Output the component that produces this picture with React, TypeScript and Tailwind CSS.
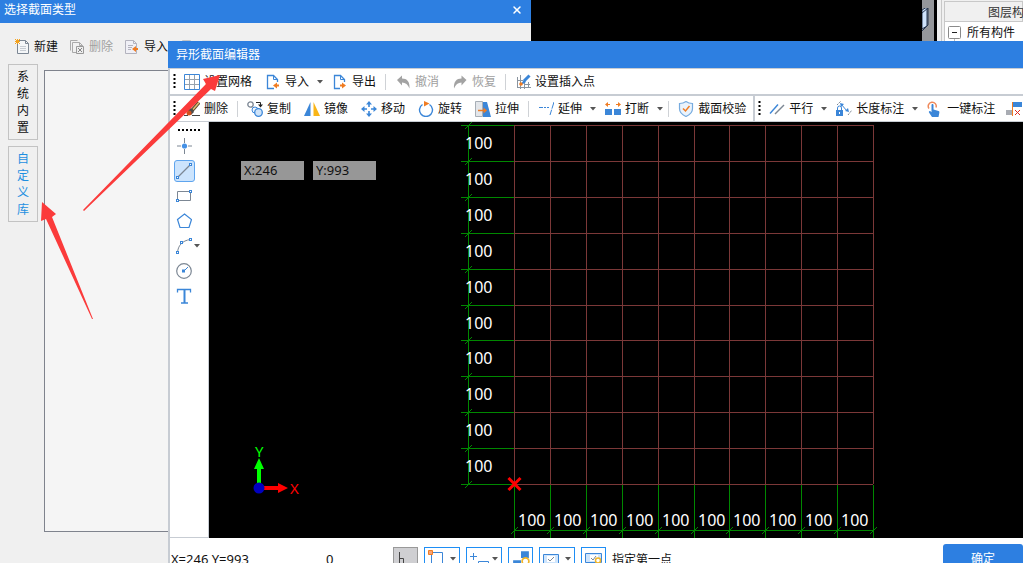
import type { ReactNode } from "react";
import clsx from "clsx";
import { X } from "lucide-react";

const BLUE = "#3b86d8";
const SLATE = "#7c8794";
const ORANGE = "#f07c22";

function Glyph({ children, size = 16 }: { children: ReactNode; size?: number }) {
  return (
    <svg width={size} height={size} viewBox="0 0 16 16" fill="none" className="shrink-0" aria-hidden="true">
      {children}
    </svg>
  );
}

/* ---------- icons ---------- */

const icons = {
  newFile: (
    <Glyph>
      <path d="M3.500 1.500h8l3 3v10h-11z" fill="#f4f6f8" stroke={SLATE} />
      <path d="M11.500 1.500v3h3" stroke={SLATE} />
      <path d="M6 7.500h6M6 9.500h6M6 11.500h6" stroke="#c6cbd2" />
      <path d="M1 0l5 5M6 0L1 5M3.500 0v5M1 2.500h5" stroke="#f5a21c" />
    </Glyph>
  ),
  deleteFile: (
    <Glyph>
      <path d="M1.500 11.500v-10h7M3.500 13.500v-10h7l3 3v7z" stroke="#a9a9a9" />
      <path d="M10.500 3.500v3h3" stroke="#a9a9a9" />
      <path d="M7.500 7.500h7v7h-7z" fill="#eee" stroke="#999" />
      <path d="M9 9l4 4M13 9l-4 4" stroke="#888" />
    </Glyph>
  ),
  importGray: (
    <Glyph>
      <path d="M1.500 1.500h8l3 3v10h-11z" fill="#f0f0f6" stroke="#b3b3be" />
      <path d="M9.500 1.500v3h3M4 6.500h5M4 8.500h4M4 10.500h3" stroke="#b3b3be" />
      <path d="M8 10l4-3v2h2v2h-2v2z" fill={ORANGE} />
    </Glyph>
  ),
  exportGray: (
    <Glyph>
      <path d="M1.500 1.500h8l3 3v10h-11z" fill="#f0f0f0" stroke="#c4c4c4" />
    </Glyph>
  ),
  grid: (
    <Glyph>
      <path d="M5.500 1v14M10.500 1v14M1 5.500h14M1 10.500h14" stroke="#98a2ad" />
      <path d="M.5 .5h15v15H.5z" stroke={BLUE} />
    </Glyph>
  ),
  importFile: (
    <Glyph>
      <path d="M9 14.500H2.500v-13h6l4 4V8" stroke={BLUE} strokeWidth="1.300" />
      <path d="M8.500 1.500v4h4" stroke={BLUE} />
      <path d="M8 11.500l4-3v2h2v2h-2v2z" fill={ORANGE} />
    </Glyph>
  ),
  exportFile: (
    <Glyph>
      <path d="M8 14.500H2.500v-13h6l4 4V8" stroke={BLUE} strokeWidth="1.300" />
      <path d="M8.500 1.500v4h4" stroke={BLUE} />
      <path d="M14 11.500l-4-3v2H8v2h2v2z" fill={ORANGE} />
    </Glyph>
  ),
  undo: (
    <Glyph>
      <path d="M2 6l5-4.500V4.500c5 0 8 3 7.500 10-1.500-4-4-6-7.500-6v3z" fill="#a3a3a3" />
    </Glyph>
  ),
  redo: (
    <Glyph>
      <path d="M14.500 6l-5-4.500V4.500c-5 0-8 3-7.500 10 1.500-4 4-6 7.500-6v3z" fill="#a3a3a3" />
    </Glyph>
  ),
  insertPoint: (
    <Glyph>
      <path d="M5.500 1v14M9.500 8v7M2 6.500h6M2 13.500h14M2.500 3v11M9 10.500h6M13.500 8v6" stroke="#8a949f" />
      <path d="M14.500 1.500L9 7" stroke={BLUE} strokeWidth="3" />
      <path d="M5 11l4-5 2 2-3 2z" fill={BLUE} />
      <circle cx="6" cy="10" r="1.800" fill={ORANGE} />
    </Glyph>
  ),
  brush: (
    <Glyph>
      <path d="M0 14.500h4M8 14.500h8" stroke="#444" />
      <path d="M15 1.500L8 9.500" stroke="#5a4a30" strokeWidth="3.500" />
      <path d="M15 1.500L9 8.500" stroke="#e2c074" strokeWidth="1.500" />
      <path d="M3 9l4 5 3-3-3-4z" fill="#4c4c4c" />
      <circle cx="5" cy="12" r="2.500" fill="#d3511b" />
    </Glyph>
  ),
  copy: (
    <Glyph>
      <circle cx="3.500" cy="3.500" r="2.700" stroke={SLATE} strokeWidth="1.300" />
      <circle cx="8" cy="9" r="3" fill="#eef5fd" stroke={BLUE} />
      <circle cx="11.500" cy="11.500" r="3.800" fill="#cfe3f8" stroke={BLUE} strokeWidth="1.300" />
      <path d="M9 1.500h4.500V4" stroke="#222" />
      <path d="M11 3.500h5l-2.500 3z" fill="#222" />
    </Glyph>
  ),
  mirror: (
    <Glyph>
      <path d="M6.500 1v14H0z" fill={BLUE} />
      <path d="M9.500 1v14H16z" fill="#f9b517" />
    </Glyph>
  ),
  move: (
    <Glyph>
      <path d="M8 3v3M8 10v3M3 8h3M10 8h3" stroke={BLUE} strokeWidth="1.600" />
      <path d="M8 0l3 3.500H5zM8 16l3-3.500H5zM0 8l3.500-3v6zM16 8l-3.500-3v6z" fill={BLUE} />
    </Glyph>
  ),
  rotate: (
    <Glyph>
      <path d="M11.500 3.500a6.500 6.500 0 11-7 0" stroke={BLUE} strokeWidth="1.400" />
      <path d="M6 0l5.500 2.500L6 5.500z" fill={ORANGE} />
    </Glyph>
  ),
  stretch: (
    <Glyph>
      <path d="M.5 .5h7v15h-7z" fill="#e3e6ea" stroke="#a7aeb6" />
      <path d="M8 1h4l4 15H8z" fill={BLUE} />
      <path d="M3 9.500h7" stroke={ORANGE} strokeWidth="1.500" />
      <path d="M8.500 6.500l3.500 3-3.500 3z" fill={ORANGE} />
    </Glyph>
  ),
  extend: (
    <Glyph>
      <path d="M1 6.500h4M6 6.500h2M9 6.500h2" stroke={BLUE} />
      <path d="M16 1l-4 13" stroke={BLUE} strokeDasharray="7 1" />
    </Glyph>
  ),
  breakLine: (
    <Glyph>
      <path d="M0 8h7v6H0zM9 8h7v6H9z" fill={BLUE} />
      <path d="M1 3.500h4M11 3.500h4" stroke={ORANGE} />
      <path d="M0 3.500L3 1v5zM16 3.500L13 1v5z" fill={ORANGE} />
    </Glyph>
  ),
  shield: (
    <Glyph>
      <path
        d="M8 .5c2 1.500 4 2 6.500 2v5c0 3.500-3 6.500-6.500 8-3.500-1.500-6.500-4.500-6.500-8v-5c2.500 0 4.500-.5 6.500-2z"
        fill="#eaf3fc"
        stroke="#76abdf"
        strokeWidth="1.200"
      />
      <path d="M5 7.500l2.500 2.500L11.500 5" stroke={ORANGE} strokeWidth="1.500" />
    </Glyph>
  ),
  parallel: (
    <Glyph>
      <path d="M1 12.500L9 3.500" stroke={BLUE} strokeWidth="1.400" />
      <path d="M6 13L15 4" stroke={SLATE} strokeWidth="1.400" />
    </Glyph>
  ),
  length: (
    <Glyph>
      <path d="M1.500 9V7a2 2 0 014 0v2" stroke={BLUE} />
      <path d="M0 9h7v6H0z" fill={BLUE} />
      <path d="M3 11h1v2H3z" fill="#fff" />
      <path d="M5 3l6 7" stroke={BLUE} />
      <path d="M4 2l4 1-3 3zM13 11l-4-1 3-3z" fill={BLUE} />
      <path d="M1 4l4-4M12 14l4-5" stroke={SLATE} strokeDasharray="2 1" />
    </Glyph>
  ),
  finger: (
    <Glyph>
      <path d="M2 7.500a4 4 0 117-1" stroke="#ef8a5c" strokeWidth="1.500" />
      <path
        d="M4.500 4c0-1.500 2-1.500 2 0v4.500l5 1.500c1 .3 1 1 .8 2L11.500 16H5l-3-4.500c-.5-1 .5-2 1.500-1.200l1 1z"
        fill={BLUE}
      />
    </Glyph>
  ),
  clearMark: (
    <Glyph>
      <path d="M0 9h6v5H0z" fill="#a9acb3" />
      <path d="M6.500 1v14" stroke={ORANGE} />
      <path d="M7 1h9v5H7z" fill={BLUE} />
      <path d="M9 9l5 5M14 9l-5 5" stroke="#e02b20" />
    </Glyph>
  ),
};

function Node({ x, y }: { x: number; y: number }) {
  return <rect x={x - 1} y={y - 1} width="2" height="2" fill="#fff" stroke={BLUE} />;
}

const drawTools: { name: string; icon: ReactNode; active?: boolean; menu?: boolean }[] = [
  {
    name: "点",
    icon: (
      <Glyph>
        <path d="M8.500 0v5M8.500 11v5M1 8h4M12 8h4" stroke={SLATE} />
        <circle cx="8.500" cy="8" r="2.600" fill="#4591e6" />
      </Glyph>
    ),
  },
  {
    name: "直线",
    active: true,
    icon: (
      <Glyph>
        <path d="M2 14L14 2" stroke={SLATE} strokeWidth="1.300" />
        <Node x={1.5} y={14.5} />
        <Node x={14.5} y={1.5} />
      </Glyph>
    ),
  },
  {
    name: "矩形",
    icon: (
      <Glyph>
        <path d="M1.500 3.500h13v9h-13z" stroke={SLATE} />
        <Node x={1.5} y={12.5} />
        <Node x={14.5} y={3.5} />
      </Glyph>
    ),
  },
  {
    name: "多边形",
    icon: (
      <Glyph>
        <path d="M8.500 1l7 5.500-2.500 8H4l-2.500-8z" stroke={BLUE} strokeWidth="1.200" />
      </Glyph>
    ),
  },
  {
    name: "弧线",
    menu: true,
    icon: (
      <Glyph>
        <path d="M1.500 14.500C2 8 6 2.500 14.500 1.500" stroke={SLATE} />
        <Node x={1.5} y={14.5} />
        <Node x={5.5} y={4.5} />
        <Node x={14.5} y={1.5} />
      </Glyph>
    ),
  },
  {
    name: "圆",
    icon: (
      <Glyph>
        <circle cx="8" cy="8" r="7.300" stroke={SLATE} strokeWidth="1.200" />
        <path d="M8 8l4-4" stroke={BLUE} />
        <Node x={7.5} y={8} />
      </Glyph>
    ),
  },
  {
    name: "文字",
    icon: (
      <Glyph>
        <path d="M1.500 4.500v-3h13v3M5 15h7" stroke={BLUE} strokeWidth="1.300" />
        <path d="M8.500 1v14" stroke={BLUE} strokeWidth="2" />
      </Glyph>
    ),
  },
];

/* ---------- toolbar parts ---------- */

function Caret() {
  return (
    <svg width="6" height="4" viewBox="0 0 6 4" className="shrink-0" aria-hidden="true">
      <path d="M0 0h6L3 3.500z" fill="#555" />
    </svg>
  );
}

function Handle() {
  return (
    <svg width="3" height="15" viewBox="0 0 3 15" className="mr-px ml-0.5 shrink-0" aria-hidden="true">
      <path d="M1.500 0v15" stroke="#000" strokeWidth="2" strokeDasharray="2 2" />
    </svg>
  );
}

function Separator() {
  return <span className="mx-0.5 h-4 w-px shrink-0 bg-[#cfd2d6]" />;
}

type ToolProps = { icon: ReactNode; label?: string; menu?: boolean; tight?: boolean; disabled?: boolean };

function Tool({ icon, label, menu, tight, disabled }: ToolProps) {
  return (
    <button
      type="button"
      disabled={disabled}
      className={clsx(
        "flex h-[22px] shrink-0 items-center gap-1 rounded-sm pl-1.5 whitespace-nowrap",
        menu ? "pr-0.5" : tight ? "pr-1" : "pr-1.5",
        disabled ? "text-[#a0a0a0]" : "text-[#111]",
      )}
    >
      {icon}
      {label}
      {menu && (
        <span className="ml-1">
          <Caret />
        </span>
      )}
    </button>
  );
}

/* ---------- drawing area ---------- */

const STEPS = Array.from({ length: 11 }, (_, i) => Math.round(i * 35.9));
const GX = 305;
const GY = 3;
const SPAN = STEPS[10];

function Canvas() {
  return (
    <svg width="814" height="416" className="block" role="img" aria-label="截面网格">
      <g stroke="#7b3838" shapeRendering="crispEdges">
        {STEPS.map((s) => (
          <g key={s}>
            <path d={`M${GX + s}.5 ${GY}v${SPAN}`} />
            <path d={`M${GX} ${GY + s}.5h${SPAN}`} />
          </g>
        ))}
      </g>
      <g stroke="#008800" fill="none">
        <path d={`M259.500 ${GY}v${SPAN}`} />
        <path d={`M${GX} 408.500h${SPAN}`} />
        {STEPS.map((s) => (
          <g key={s}>
            <path d={`M252 ${GY + s}.5h53`} />
            <path d={`M256 ${GY + s + 4}l7-7`} />
            <path d={`M${GX + s}.5 363v53`} />
            <path d={`M${GX + s - 3} 412l7-7`} />
          </g>
        ))}
      </g>
      <g fill="#fff" fontSize="16">
        {STEPS.slice(0, 10).map((s) => (
          <g key={s}>
            <text x="256" y={GY + s + 24}>100</text>
            <text x={GX + s + 4} y="404">100</text>
          </g>
        ))}
      </g>
      <path d="M299.500 356l12 12M311.500 356l-12 12" stroke="#f00" strokeWidth="3" />
      <path d="M48 366V347h-3l5-11 5 11h-3v19z" fill="#0f0" />
      <path d="M50 364h19v-3l10 5-10 5v-3H50z" fill="#f00" />
      <circle cx="50" cy="366" r="5.500" fill="#0000c0" />
      <text x="46" y="335" fontSize="15" fill="#0f0">Y</text>
      <text x="81" y="372" fontSize="15" fill="#f00">X</text>
    </svg>
  );
}

/* ---------- status bar ---------- */

type StatusButtonProps = { name: string; children: ReactNode; menu?: boolean; pressed?: boolean };

function StatusButton({ name, children, menu, pressed }: StatusButtonProps) {
  return (
    <button
      type="button"
      aria-label={name}
      className={clsx(
        "flex h-6 shrink-0 items-center gap-0.5 border pl-[3px]",
        menu ? "w-9" : "w-[25px]",
        pressed ? "border-[#999] bg-[#cfcfd2]" : "border-[#1e8ef5] bg-white",
      )}
    >
      {children}
      {menu && <Caret />}
    </button>
  );
}

function StatusBar() {
  return (
    <div className="flex h-[42px] shrink-0 items-center gap-1.5">
      <span className="w-[150px] pt-0.5 pl-px text-[13px]">X=246 Y=993</span>
      <span className="w-[61px] pt-0.5 text-[13px]">0</span>
      <StatusButton name="正交" pressed>
        <Glyph>
          <path d="M2.500 1v12M2.500 7.500h4V13M6 12.500h9" stroke="#444" />
        </Glyph>
      </StatusButton>
      <StatusButton name="对象捕捉" menu>
        <svg width="20" height="18" viewBox="0 0 20 18" fill="none" aria-hidden="true">
          <path d="M3.500 2.500h11v15h-11z" stroke={BLUE} />
          <path d="M.5 .5h4v4h-4z" fill="#f7a477" stroke={ORANGE} />
        </svg>
      </StatusButton>
      <StatusButton name="动态输入" menu>
        <svg width="20" height="18" viewBox="0 0 20 18" fill="none" aria-hidden="true">
          <path d="M0 6.500h7M3.500 3v7" stroke={BLUE} />
          <path d="M8.500 11.500h10v5h-10z" stroke={BLUE} />
        </svg>
      </StatusButton>
      <StatusButton name="图层设置">
        <Glyph size={18}>
          <path d="M8 1h7v6H8zM1 9h7v6H1z" fill={BLUE} />
          <circle cx="12" cy="10" r="3" fill="#fff" stroke="#f0b52a" strokeWidth="1.500" />
        </Glyph>
      </StatusButton>
      <StatusButton name="显示" menu>
        <svg width="20" height="14" viewBox="0 0 20 14" fill="none" aria-hidden="true">
          <path d="M.5 2.500h15v9H.5z" fill="#cfe5fc" stroke={BLUE} />
          <path d="M4 4h8v6H4z" fill="#fff" />
          <path d="M5 7l2 2 4-4" stroke={SLATE} />
        </svg>
      </StatusButton>
      <StatusButton name="显示设置">
        <svg width="18" height="16" viewBox="0 0 18 16" fill="none" aria-hidden="true">
          <path d="M.5 2.500h16v9H.5z" fill="#cfe5fc" stroke={BLUE} />
          <path d="M5 4h8v6H5z" fill="#fff" />
          <path d="M6 7l2 2 3-4" stroke={SLATE} />
          <circle cx="13" cy="9.500" r="2.500" fill="#fff" stroke="#f0b52a" strokeWidth="1.500" />
        </svg>
      </StatusButton>
      <span className="pt-0.5">指定第一点</span>
      <button type="button" className="ml-auto h-[30px] w-20 rounded-[3px] bg-[#2d7fe1] text-white">
        确定
      </button>
    </div>
  );
}

/* ---------- windows ---------- */

function SectionTypeWindow() {
  return (
    <section className="absolute top-0 left-0 flex h-full w-[531px] flex-col bg-[#f0f0f0]">
      <header className="flex h-[23px] shrink-0 items-center justify-between bg-[#2d7fe1] pr-2 pb-1 pl-1 text-white">
        <h1>选择截面类型</h1>
        <button type="button" aria-label="关闭">
          <X size={12} strokeWidth={3} />
        </button>
      </header>
      <div className="flex h-[41px] shrink-0 items-center gap-px pt-1.5 pl-2">
        <Tool icon={icons.newFile} label="新建" tight />
        <Tool icon={icons.deleteFile} label="删除" tight disabled />
        <Tool icon={icons.importGray} label="导入" />
        <Tool icon={icons.exportGray} disabled />
      </div>
      <div className="mb-[31px] flex min-h-0 grow gap-1.5 pl-2">
        <nav className="flex w-[30px] shrink-0 flex-col gap-1.5 leading-[17px]">
          <button type="button" className="border border-[#c3c3c3] px-2 py-[3px]">
            系统内置
          </button>
          <button type="button" className="border border-[#c3c3c3] px-2 py-[3px] text-[#1e8fe0]">
            自定义库
          </button>
        </nav>
        <div className="mt-1.5 grow border border-[#7f838d] bg-[#f5f5f5]" />
      </div>
    </section>
  );
}

function LayerPanel() {
  return (
    <aside className="absolute top-0 right-0 flex h-full w-[101px]">
      <div className="w-3 shrink-0 bg-[#95979b]">
        <svg width="8" height="24" viewBox="0 0 8 24" className="mt-2" aria-hidden="true">
          <path d="M0 2l5-3v19l-5 3z" fill="#cfe3fb" stroke="#27364f" />
          <path d="M0 5l6-5M6 0v17l-6 6" fill="none" stroke="#27364f" />
        </svg>
      </div>
      <div className="ml-[3px] flex min-w-0 grow flex-col bg-[#f0f0f0] pl-1">
        <div className="flex grow flex-col overflow-hidden border-l border-[#c8c8c8] pt-px pl-0.5">
          <div className="flex h-[21px] shrink-0 items-center border border-[#c8c8c8] pt-0.5 pl-[43px] whitespace-nowrap text-[#333]">
            图层构件
          </div>
          <div className="flex grow items-start gap-1.5 border-l border-[#c8c8c8] bg-white pl-[3px] leading-[22px] whitespace-nowrap">
            <svg width="13" height="24" viewBox="0 0 13 24" fill="none" className="shrink-0" aria-hidden="true">
              <rect x=".5" y="4.500" width="12" height="12" rx="1" stroke="#8a8a8a" />
              <path d="M4 10.500h5" stroke="#222" />
              <path d="M6.500 17v7" stroke="#bbb" />
            </svg>
            所有构件
          </div>
        </div>
      </div>
    </aside>
  );
}

function EditorWindow() {
  return (
    <section className="absolute top-[41px] right-0 -bottom-[17px] left-[168px] flex flex-col overflow-hidden bg-white">
      <header className="flex h-[27px] shrink-0 items-center bg-[#2d7fe1] pl-2 text-white">
        <h2>异形截面编辑器</h2>
      </header>
      <div className="flex grow flex-col border-t border-l-2 border-[#c7ccd3]">
        <div className="flex h-[27px] shrink-0 items-center gap-px border-b-2 border-[#c7ccd3] pl-px">
          <Handle />
          <Tool icon={icons.grid} label="设置网格" />
          <Tool icon={icons.importFile} label="导入" menu />
          <Tool icon={icons.exportFile} label="导出" />
          <Separator />
          <Tool icon={icons.undo} label="撤消" disabled />
          <Tool icon={icons.redo} label="恢复" disabled />
          <Separator />
          <Tool icon={icons.insertPoint} label="设置插入点" />
        </div>
        <div className="flex h-[26px] shrink-0 items-center gap-px overflow-hidden border-b border-[#c7ccd3] pl-px">
          <Handle />
          <Tool icon={icons.brush} label="删除" />
          <Separator />
          <Tool icon={icons.copy} label="复制" />
          <Tool icon={icons.mirror} label="镜像" />
          <Tool icon={icons.move} label="移动" />
          <Tool icon={icons.rotate} label="旋转" />
          <Tool icon={icons.stretch} label="拉伸" />
          <Separator />
          <Tool icon={icons.extend} label="延伸" menu />
          <Tool icon={icons.breakLine} label="打断" menu />
          <Separator />
          <Tool icon={icons.shield} label="截面校验" />
          <span className="h-full w-0.5 shrink-0 bg-[#c7ccd3]" />
          <Handle />
          <Tool icon={icons.parallel} label="平行" menu />
          <Tool icon={icons.length} label="长度标注" menu />
          <Tool icon={icons.finger} label="一键标注" tight />
          <Tool icon={icons.clearMark} />
        </div>
        <div className="flex min-h-0 grow">
          <div className="flex w-[39px] shrink-0 flex-col gap-[3px] border-r border-b border-[#c7ccd3] pl-1">
            <svg width="22" height="2" viewBox="0 0 22 2" className="mt-[7px] mb-px ml-1 shrink-0" aria-hidden="true">
              <path d="M0 1h22" stroke="#000" strokeWidth="2" strokeDasharray="2 2" />
            </svg>
            {drawTools.map((tool) => (
              <button
                key={tool.name}
                type="button"
                aria-label={tool.name}
                className={clsx(
                  "flex h-[22px] shrink-0 items-center gap-0.5 rounded-[3px] border pl-px",
                  tool.menu ? "w-[29px]" : "w-[21px]",
                  tool.active ? "border-[#5fa5ee] bg-[#cce4fd]" : "border-transparent",
                )}
              >
                {tool.icon}
                {tool.menu && <Caret />}
              </button>
            ))}
          </div>
          <div className="relative min-w-0 grow overflow-hidden bg-black">
            <Canvas />
            {/* floating coordinate boxes */}
            <div className="absolute top-[39px] left-8 flex gap-[9px] text-[13px]">
              <input aria-label="X" defaultValue="X:246" className="h-[19px] w-[63px] bg-[#979797] pl-[3px]" />
              <input aria-label="Y" defaultValue="Y:993" className="h-[19px] w-[63px] bg-[#979797] pl-[3px]" />
            </div>
          </div>
        </div>
        <StatusBar />
      </div>
    </section>
  );
}

export default function App() {
  return (
    <main className="relative h-screen w-full overflow-hidden bg-black font-['Noto_Sans','Noto_Sans_CJK_SC',sans-serif] text-[12px] text-[#111]">
      <LayerPanel />
      <SectionTypeWindow />
      <EditorWindow />
      {/* pointer arrows */}
      <svg width="240" height="330" className="pointer-events-none absolute top-0 left-0" fill="#fb3b3b" aria-hidden="true">
        <path d="M83 210L206 84l-3-5 17-4-5 16-4-2L84 211z" />
        <path d="M42 202l14 12-4 3 41 102h-1L46 219l-5 2z" />
      </svg>
    </main>
  );
}
